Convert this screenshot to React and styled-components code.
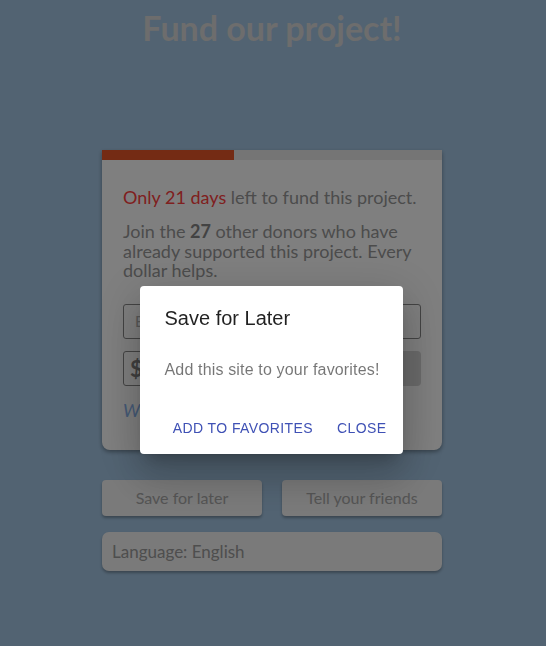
import React from "react";
import styled, { createGlobalStyle } from "styled-components";

const Global = createGlobalStyle`
  html, body { margin: 0; padding: 0; }
  body {
    background: #a5c7e5;
    font-family: Lato, "Open Sans", sans-serif;
    color: #9a9a9a;
    min-height: 646px;
  }
`;

const Page = styled.div`
  width: 340px;
  margin: 0 0 0 calc(50% - 171px);
  padding: 8px 0 40px;
  display: flex;
  flex-direction: column;
  align-items: stretch;
`;

const Title = styled.h1`
  margin: 0 -60px 102px;
  text-align: center;
  font-size: 34px;
  font-weight: 700;
  line-height: 40px;
  color: #dadada;
`;

const Card = styled.section`
  background: #ffffff;
  border-radius: 0 0 8px 8px;
  box-shadow: 0 2px 4px rgba(0, 0, 0, 0.35);
  overflow: hidden;
`;

const Progress = styled.div`
  height: 10px;
  background: #ebebeb;
`;

const ProgressFill = styled.div`
  height: 100%;
  background: #e85628;
`;

const CardBody = styled.div`
  padding: 28px 21px 30px;
  display: flex;
  flex-direction: column;
`;

const Text = styled.p`
  margin: 0 0 ${(p) => p.$mb || 0}px;
  font-size: 18px;
  line-height: 19.5px;
  color: #989898;
  b { color: #868686; font-weight: 700; }
`;

const Urgent = styled.span`
  color: #ff4040;
`;

const Field = styled.div`
  height: 35px;
  box-sizing: border-box;
  border: 1px solid #888;
  border-radius: 3px;
  display: flex;
  align-items: center;
  padding: 0 11px;
  font-size: 15px;
  color: #b0b0b0;
`;

const Row = styled.div`
  display: flex;
  gap: 10px;
  margin-top: 12px;
`;

const Amount = styled(Field)`
  flex: 1;
  padding: 0 6px;
  gap: 6px;
  font-size: 22px;
  font-weight: 700;
  color: #808080;
`;

const Give = styled.div`
  width: 150px;
  height: 35px;
  border-radius: 4px;
  background: #d6d6d6;
  display: flex;
  align-items: center;
  justify-content: center;
  font-size: 16px;
  color: #9a9a9a;
`;

const Why = styled.a`
  margin-top: 14px;
  font-size: 18px;
  line-height: 20px;
  font-style: italic;
  color: #8ab4ee;
  text-decoration: none;
`;

const Actions = styled.div`
  display: grid;
  grid-template-columns: 1fr 1fr;
  gap: 20px;
  margin-top: 30px;
`;

const PageButton = styled.button`
  height: 36px;
  border: 0;
  border-radius: 4px;
  background: #f4f4f4;
  box-shadow: 0 2px 3px rgba(0, 0, 0, 0.3);
  font-family: inherit;
  font-size: 16px;
  color: #aaaaaa;
`;

const Select = styled.div`
  margin-top: 16px;
  height: 39px;
  border-radius: 7px;
  background: #f4f4f4;
  box-shadow: 0 2px 3px rgba(0, 0, 0, 0.3);
  display: flex;
  align-items: center;
  padding: 0 10px;
  font-size: 17px;
  color: #9c9c9c;
`;

const Backdrop = styled.div`
  position: fixed;
  inset: 0;
  background: rgba(0, 0, 0, 0.5);
  display: flex;
  align-items: center;
  justify-content: center;
  padding: 93px 0 0 0;
  box-sizing: border-box;
`;

const Dialog = styled.div`
  background: #fff;
  border-radius: 4px;
  box-shadow: 0 11px 15px -7px rgba(0,0,0,0.2), 0 24px 38px 3px rgba(0,0,0,0.14), 0 9px 46px 8px rgba(0,0,0,0.12);
  font-family: "Liberation Sans", Arial, sans-serif;
  display: flex;
  flex-direction: column;
  margin-left: -4px;
`;

const DialogTitle = styled.h2`
  margin: 0;
  padding: 16px 24px 16px 25px;
  font-size: 20px;
  font-weight: 400;
  line-height: 32px;
  color: rgba(0, 0, 0, 0.87);
`;

const DialogContent = styled.div`
  padding: 8px 23px 8px 25px;
`;

const DialogText = styled.p`
  margin: 0 0 12px;
  font-size: 16px;
  line-height: 24px;
  letter-spacing: 0.16px;
  color: rgba(0, 0, 0, 0.54);
`;

const DialogActions = styled.div`
  display: flex;
  justify-content: flex-end;
  gap: 8px;
  padding: 8px;
`;

const TextButton = styled.button`
  height: 36px;
  padding: 6px 8px;
  border: 0;
  background: transparent;
  font-family: inherit;
  font-size: 14px;
  letter-spacing: 0.4px;
  text-transform: uppercase;
  color: #3f51b5;
  border-radius: 4px;
`;

export default function App() {
  const progress = 38.8;
  return (
    <>
      <Global />
      <Page>
        <Title>Fund our project!</Title>
        <Card>
          <Progress>
            <ProgressFill style={{ width: `${progress}%` }} />
          </Progress>
          <CardBody>
            <Text $mb={14.5}>
              <Urgent>Only 21 days</Urgent> left to fund this project.
            </Text>
            <Text $mb={23}>
              Join the <b>27</b> other donors who have already supported this project. Every dollar helps.
            </Text>
            <Field>Email address</Field>
            <Row>
              <Amount>$<span /></Amount>
              <Give>Give Now</Give>
            </Row>
            <Why href="#">Why give $50?</Why>
          </CardBody>
        </Card>
        <Actions>
          <PageButton>Save for later</PageButton>
          <PageButton>Tell your friends</PageButton>
        </Actions>
        <Select>Language: English</Select>
      </Page>
      <Backdrop>
        <Dialog role="dialog">
          <DialogTitle>Save for Later</DialogTitle>
          <DialogContent>
            <DialogText>Add this site to your favorites!</DialogText>
          </DialogContent>
          <DialogActions>
            <TextButton>Add to favorites</TextButton>
            <TextButton>Close</TextButton>
          </DialogActions>
        </Dialog>
      </Backdrop>
    </>
  );
}
